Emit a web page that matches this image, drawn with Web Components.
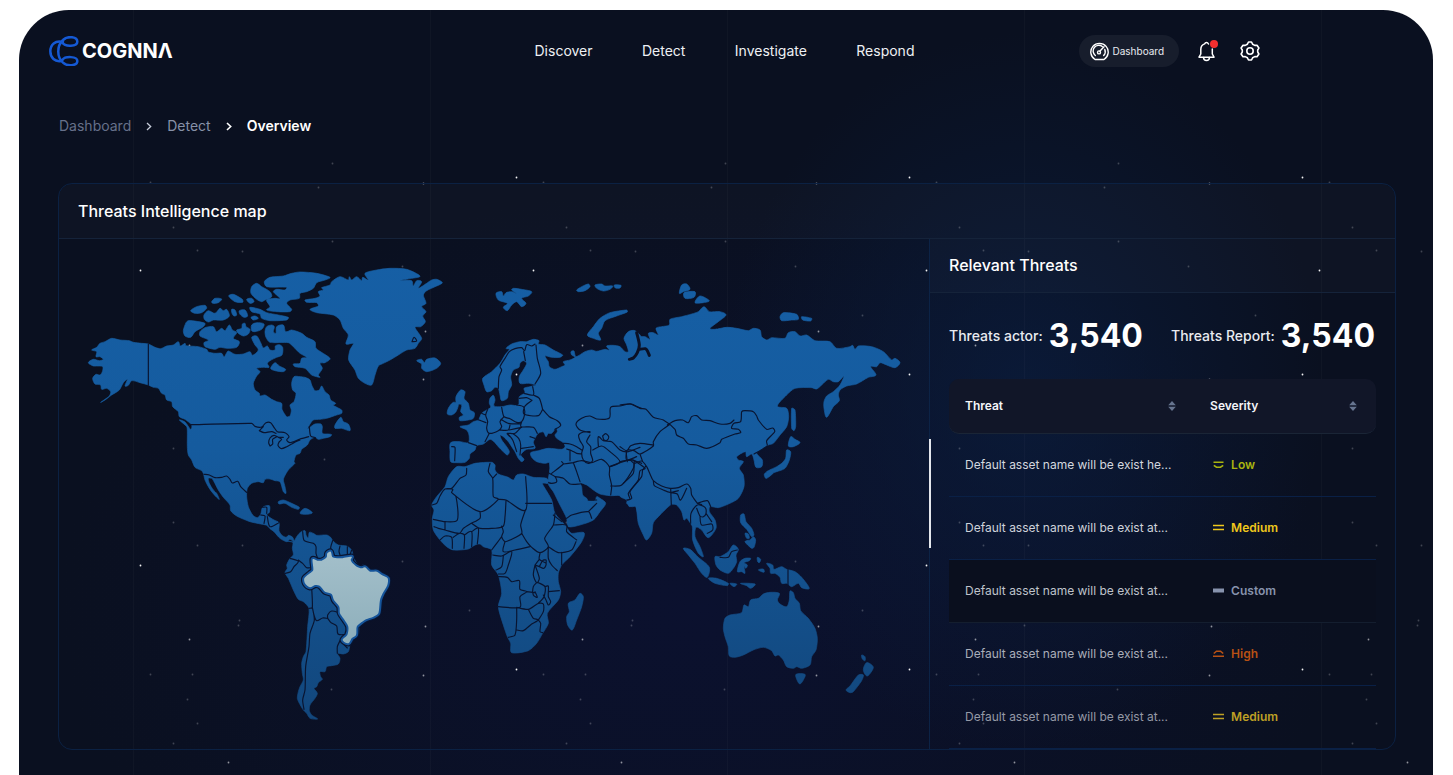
<!DOCTYPE html>
<html lang="en">
<head>
<meta charset="utf-8">
<meta name="viewport" content="width=device-width, initial-scale=1">
<title>Threats Intelligence</title>
<style>
  body { margin: 0; background: #fff; font-family: Inter, "Open Sans", sans-serif; color: #fff; }
</style>
</head>
<body>
<app-shell>
  <app-header slot="header">
    <nav-link href="#discover">Discover</nav-link>
    <nav-link href="#detect">Detect</nav-link>
    <nav-link href="#investigate">Investigate</nav-link>
    <nav-link href="#respond">Respond</nav-link>
  </app-header>
  <bread-crumbs></bread-crumbs>
  <intel-panel>
    <span slot="title">Threats Intelligence map</span>
    <world-map></world-map>
    <threat-panel slot="side">
      <span slot="title">Relevant Threats</span>
      <threat-stat label="Threats actor:" slot="stats">3,540</threat-stat>
      <threat-stat label="Threats Report:" slot="stats">3,540</threat-stat>
      <threat-table></threat-table>
    </threat-panel>
  </intel-panel>
</app-shell>

<script>
const define = (name, html) => {
  const template = document.createElement('template');
  template.innerHTML = html;
  customElements.define(name, class extends HTMLElement {
    constructor() {
      super();
      this.attachShadow({ mode: 'open' }).append(template.content.cloneNode(true));
    }
    connectedCallback() {
      for (const el of this.shadowRoot.querySelectorAll('[data-attr]')) {
        const value = this.getAttribute(el.dataset.attr) || '';
        if (el.tagName === 'A') el.setAttribute('href', value);
        else el.textContent = value;
      }
    }
  });
};

define('app-shell', `
  <style>
    :host { display: block; padding: 10px 20px 0 19px; }
    .frame {
      position: relative; overflow: hidden; box-sizing: border-box;
      min-height: calc(100vh - 10px); padding: 25px 37px 26px 39px;
      border-radius: 50px 50px 0 0; isolation: isolate;
      background:
        radial-gradient(ellipse 300px 360px at 71% 50%, #0a1c3ccc, transparent),
        radial-gradient(ellipse 640px 420px at 48% 78%, #0b112f, #0b112ca0 50%, transparent),
        #0a1020;
    }
    .lines {
      position: absolute; inset: 0; z-index: -1;
      background: linear-gradient(90deg, #ffffff06 1px, transparent 1px) 114px 0 / 297px 100%;
    }
    star-field { position: absolute; inset: 0; z-index: -1; }
    header { margin: 0 -4px 0 -9px; }
  </style>
  <div class="frame">
    <div class="lines"></div>
    <star-field></star-field>
    <header><slot name="header"></slot></header>
    <main><slot></slot></main>
  </div>`);

/* One tile of the sky, repeated across the frame; each entry is x, y. */
const sky = {
  '.95': [[7, 260], [7, 555], [383, 364], [383, 167], [383, 659]],
  '.55': [[56, 629], [290, 173], [292, 321], [290, 369], [292, 616], [290, 665], [95, 752], [56, 335]],
  '.22': [[199, 153], [199, 231], [17, 172], [185, 177], [64, 240], [109, 241], [40, 217], [40, 438],
    [40, 512], [64, 535], [109, 535], [106, 610], [105, 615], [17, 664], [59, 664], [54, 689], [64, 713],
    [40, 733], [191, 449], [198, 679], [269, 256], [336, 305], [269, 551], [336, 600]]
};

define('star-field', `
  <style>:host { display: block; } svg { display: block; width: 100%; height: 100%; }</style>
  <svg aria-hidden="true">
    <defs>
      <pattern id="sky" x="114" width="393" height="765" patternUnits="userSpaceOnUse">
        ${Object.entries(sky).map(([o, list]) => `<g fill="#fff" opacity="${o}">${list.map(([x, y]) => `<circle cx="${x}.5" cy="${y}.5" r=".9"/>`).join('')}</g>`).join('')}
      </pattern>
    </defs>
    <rect x="114" y="150" width="100%" height="100%" fill="url(#sky)"/>
  </svg>`);

define('nav-link', `
  <style>
    :host { display: block; }
    a { display: block; color: #eef0f4; text-decoration: none; font-size: 14px; line-height: 20px; }
  </style>
  <a data-attr="href" href="#"><slot></slot></a>`);

define('app-header', `
  <style>
    :host { display: grid; grid-template-columns: 1fr auto 1fr; align-items: center; height: 32px; }
    .brand { display: flex; align-items: center; gap: 3px; color: #fff; text-decoration: none;
      font-size: 20px; font-weight: 700; line-height: 32px; }
    nav { display: flex; justify-content: space-between; width: 380px; }
    .actions { display: flex; align-items: center; margin-left: 164px; }
    button { border: 0; padding: 0; margin: 0; background: none; color: #fff; font: inherit; display: block; }
    svg { display: block; }
    .pill { display: flex; align-items: center; gap: 4px; width: 100px; height: 32px; padding-left: 11px;
      box-sizing: border-box; border-radius: 16px; background: #171d2c; color: #e8eaf0;
      font-size: 10px; line-height: 16px; flex: none; }
    .bell { margin-left: 18px; }
    .gear { margin-left: 21px; }
  </style>
  <a class="brand" href="#home" aria-label="COGNNA">
    <svg width="30" height="30" viewBox="146 106 90 90" fill="none" stroke="#1559d4" stroke-width="7.5" stroke-linecap="round" aria-hidden="true">
      <path d="M188 124C164 118 150 132 150 152C150 172 164 184 182 181"/>
      <path d="M186 126C194 139 231 138 231 123C231 107 201 105 188 118C169 136 169 169 188 186C201 198 231 196 231 181C231 166 194 166 186 178"/>
    </svg>
    <span>COGNNΛ</span>
  </a>
  <nav aria-label="Main"><slot></slot></nav>
  <div class="actions">
    <button class="pill" type="button">
      <svg width="19" height="19" viewBox="0 0 19 19" fill="none" stroke="#fff" stroke-width="1.4" stroke-linecap="round" stroke-linejoin="round" aria-hidden="true">
        <path d="M5 17.5A8.7 8.7 0 1 1 14 17.5Z"/>
        <path d="M5.3 13.5A5.7 5.7 0 0 1 12.3 4.5M14.8 7.5A5.7 5.7 0 0 1 13.7 13.5"/>
        <path d="M9.8 9.3L14 4.8"/><circle cx="9" cy="10.4" r="1.5"/>
      </svg>
      Dashboard
    </button>
    <button class="bell" type="button" aria-label="Notifications">
      <svg width="22" height="24" viewBox="0 0 22 24" fill="none" stroke="#fff" stroke-width="1.5" stroke-linecap="round" stroke-linejoin="round" aria-hidden="true">
        <path d="M11.5 5C11 4 10.5 3.400 9.500 3.400S8 4 7.600 4.900C5 5.800 3.800 8 3.800 10.500V15L2 18.200H17L15.300 15V10"/>
        <path d="M6.500 18.500C6.600 20.300 7.800 21.600 9.500 21.600S12.400 20.300 12.500 18.500"/>
        <circle cx="17" cy="5" r="4" fill="#f52f2f" stroke="none"/>
      </svg>
    </button>
    <button class="gear" type="button" aria-label="Settings">
      <svg width="20" height="20" viewBox="0 0 20 20" fill="none" stroke="#fff" stroke-width="1.6" stroke-linejoin="round" aria-hidden="true">
        <circle cx="10" cy="10" r="3.200"/>
        <path d="M8.500 1H11.500L12.600 3.200L14.800 4.400L17 4.200L18.900 7L17.700 9V11L18.900 13L17 15.800L14.800 15.600L12.600 16.800L11.500 19H8.500L7.400 16.800L5.200 15.600L3 15.800L1.100 13L2.300 11V9L1.100 7L3 4.200L5.200 4.400L7.400 3.200Z"/>
      </svg>
    </button>
  </div>`);

define('bread-crumbs', `
  <style>
    :host { display: block; margin-top: 49px; }
    nav { display: flex; align-items: center; gap: 15px; height: 20px; font-size: 14px; line-height: 20px; padding-left: 1px; }
    a { text-decoration: none; color: #66708a; }
    a.mid { color: #8791a8; }
    a.here { color: #fff; font-weight: 600; }
    svg { display: block; }
  </style>
  <nav aria-label="Breadcrumb">
    <a href="#dashboard">Dashboard</a>
    <svg width="6" height="9" viewBox="0 0 6 9" fill="none" stroke="#c5cbd8" stroke-width="1.300" aria-hidden="true"><path d="M1 1L4.700 4.500L1 8"/></svg>
    <a class="mid" href="#detect">Detect</a>
    <svg width="6" height="9" viewBox="0 0 6 9" fill="none" stroke="#fff" stroke-width="1.600" aria-hidden="true"><path d="M1 1L4.700 4.500L1 8"/></svg>
    <a class="here" href="#overview" aria-current="page">Overview</a>
  </nav>`);

define('intel-panel', `
  <style>
    :host { display: block; margin-top: 47px; border: 1px solid #0b2143; border-radius: 14px; overflow: hidden; }
    h1 { margin: 0; padding: 0 19px; font-size: 16px; font-weight: 500; line-height: 54px;
      background: #ffffff05; border-bottom: 1px solid #15233a; }
    .body { display: grid; grid-template-columns: minmax(0, 1fr) 466px; }
    .side { position: relative; border-left: 1px solid #0c2346; }
    .thumb { position: absolute; left: -1px; top: 200px; width: 2px; height: 109px; background: #e3e6ec; }
  </style>
  <h1><slot name="title"></slot></h1>
  <div class="body">
    <slot></slot>
    <div class="side"><slot name="side"></slot><div class="thumb"></div></div>
  </div>`);

define('threat-panel', `
  <style>
    :host { display: block; }
    h2 { margin: 0; padding: 0 19px; font-size: 16px; font-weight: 500; line-height: 53px;
      background: #ffffff05; border-bottom: 1px solid #15233a; }
    .stats { display: flex; justify-content: space-between; align-items: center; height: 86px; padding: 0 20px 0 19px; }
  </style>
  <h2><slot name="title"></slot></h2>
  <div class="stats"><slot name="stats"></slot></div>
  <slot></slot>`);

define('threat-stat', `
  <style>
    :host { display: flex; align-items: center; gap: 6px; }
    .label { font-size: 14px; font-weight: 500; line-height: 20px; color: #e9ebf0; }
    .value { font-size: 32px; font-weight: 700; line-height: 40px; }
  </style>
  <span class="label" data-attr="label"></span>
  <span class="value"><slot></slot></span>`);

const sortIcon = `<svg width="8" height="10" viewBox="0 0 8 10" fill="#66748f" aria-hidden="true"><path d="M4 0L7.800 4.300H.2ZM4 10L7.800 5.700H.2Z"/></svg>`;
const marks = {
  low: '<path d="M.5 1.200H10.500M.8 4.300L3.500 6.200H7.500L10.200 4.300"/>',
  medium: '<path d="M0 1.500H11M0 5.500H11"/>',
  custom: '<path d="M0 3.500H11" stroke-width="4"/>',
  high: '<path d="M0 6.300H11M.8 3.500L3.500 1.200H7.500L10.200 3.500"/>'
};
const rows = [
  ['Default asset name will be exist he...', 'low', 'Low', '#a9b40f', '#d3d7df'],
  ['Default asset name will be exist at...', 'medium', 'Medium', '#f0c81c', '#ced2da'],
  ['Default asset name will be exist at...', 'custom', 'Custom', '#8793ad', '#bfc3cb'],
  ['Default asset name will be exist at...', 'high', 'High', '#b85114', '#a9adb9'],
  ['Default asset name will be exist at...', 'medium', 'Medium', '#bea025', '#9599a6']
];

define('threat-table', `
  <style>
    :host { display: block; padding: 0 19px; }
    table { width: 100%; border-collapse: separate; border-spacing: 0; table-layout: fixed; font-size: 12px; line-height: 16px; }
    col.name { width: 56%; }
    th { height: 54px; padding: 0; text-align: left; font-weight: 600; background: #111628; border-bottom: 1px solid #1a2536; }
    th:first-child { border-radius: 10px 0 0 10px; }
    th:last-child { border-radius: 0 10px 10px 0; }
    th button { display: flex; align-items: center; justify-content: space-between; width: 100%; height: 54px;
      padding: 0 12px 0 16px; border: 0; background: none; color: #f4f5f8; font: inherit; }
    th:last-child button { padding: 0 19px 0 22px; }
    td { height: 62px; padding: 0 0 0 16px; border-bottom: 1px solid #0a2046; white-space: nowrap; }
    td + td { padding-left: 25px; font-weight: 600; }
    tr.custom td { background: #0a0f1e; border-bottom-color: #141e2f; }
    .mark { display: flex; align-items: center; gap: 7px; }
    svg { display: block; flex: none; }
  </style>
  <table>
    <colgroup><col class="name"><col></colgroup>
    <thead><tr>
      <th scope="col"><button type="button">Threat ${sortIcon}</button></th>
      <th scope="col"><button type="button">Severity ${sortIcon}</button></th>
    </tr></thead>
    <tbody>${rows.map(([name, kind, label, tint, ink]) => `
      <tr class="${kind}"><td style="color:${ink}">${name}</td>
      <td style="color:${tint}"><span class="mark"><svg width="11" height="8" viewBox="0 0 11 8" fill="none" stroke="currentColor" stroke-width="1.600" aria-hidden="true">${marks[kind]}</svg>${label}</span></td></tr>`).join('')}
    </tbody>
  </table>`);

/* Map geometry: each sheet is drawn at three units per map pixel from its own origin. */
const sheets = [
  { at: [70, 260], land: `
M65 270L80 262 90 250 105 245 125 235 150 240 178 242 190 247 215 250 235 252 255 262 272 266 290 258 310 255 325 245 331 258 345 250 348 257 385 260 410 268 415 276 435 280 455 280 462 291 468 282 475 273 495 283 520 282 540 275 548 286 565 270 555 255 545 232 560 228 572 248 580 264 592 258 600 270 615 270 616 258 628 254 638 262 636 285 620 292 600 302 592 310 597 322 580 322 560 325 570 335 560 348 550 370 555 390 568 400 570 408 585 405 605 418 620 425 635 430 636 448 650 470 660 468 664 450 660 435 672 425 678 400 668 390 665 370 672 350 690 350 705 352 720 360 725 375 735 392 748 390 755 378 765 395 777 405 782 420 797 430 790 436 815 450 815 460 800 465 770 475 750 478 730 480 720 492 713 507 725 498 735 492 753 492 757 500 757 520 775 522 785 524 780 530 760 535 745 538 735 532 720 540 712 555 695 568 690 580 678 585 672 605 675 610 655 630 643 650 640 660 645 680 648 700 640 695 630 665 615 662 600 657 585 658 580 668 565 665 545 670 532 685 530 710 535 740 548 765 562 773 572 763 578 742 598 737 598 757 590 765 612 780 627 788 627 812 635 825 648 832 656 826 668 832 672 845 660 838 650 845 630 835 612 815 600 806 590 796 572 792 540 785 500 768 482 752 480 735 460 712 445 690 432 665 425 655 415 655 418 670 430 690 440 700 448 718 440 712 425 695 415 680 405 660 400 640 395 632 375 622 365 600 355 585 352 560 352 515 350 500 328 480 345 486 362 508 365 495 345 478 328 470 325 455 308 440 305 425 290 420 285 405 275 400 265 385 250 382 235 375 210 368 185 362 175 376 165 378 172 358 160 368 148 390 125 405 105 420 92 427 118 408 122 395 110 385 95 388 92 375 75 372 68 355 78 343 90 345 97 335 98 320 80 318 70 318 55 308 70 298 88 302 100 298 90 290 78 290 80 275Z
M348 188L355 182 380 184 405 190 400 200 375 215 362 232 345 228 340 212ZM390 215L405 203 430 200 440 215 455 205 465 212 478 195 487 210 500 218 490 235 508 245 500 262 470 265 450 262 435 268 405 260 402 248 415 240 390 228ZM362 152L380 140 405 136 410 145 395 158 375 160ZM402 165L415 152 435 160 450 145 460 152 470 148 478 168 460 180 430 180 415 186 403 178ZM425 125L435 115 455 117 445 128 428 130ZM476 108L490 103 517 118 518 127 495 125ZM530 118L545 115 552 125 540 130ZM485 148L495 150 500 165 492 168 486 160ZM508 152L525 150 533 168 522 172 510 163ZM500 210L515 205 517 192 525 190 528 200 540 208 535 222 520 228 503 218ZM545 195L560 188 582 192 575 208 555 215 545 212ZM540 142L570 148 590 158 625 165 655 172 650 180 600 182 575 175 570 162 545 155ZM543 172L555 168 565 175 550 180Z
M545 80L560 70 575 80 600 95 605 110 585 120 575 125 560 118 543 100ZM583 65L600 52 640 48 665 40 690 36 740 40 780 52 765 60 740 68 730 85 710 95 690 100 688 115 660 120 650 130 665 148 660 155 620 155 590 150 600 140 590 120 615 115 630 115 610 95 620 88 645 90 650 82 590 80Z`,
    cut: '', lines: `M235 252L235 376M362 494L545 490 555 499 575 501 588 488 602 488 612 502 622 515 645 518 657 530 650 540 660 548 690 537 716 530M568 512L580 500M568 512L582 518 605 515 618 520M600 558L596 548 600 534 612 526 625 532 635 538 628 545 624 556 634 566 650 560 672 548 690 540M600 558L608 552 608 538 620 530M625 532L640 532M718 500L722 528 736 533M402 643L418 645 435 653 455 652 470 648 480 658 487 669 503 664 512 680 530 697M578 742L590 742 590 760M572 765L585 768 582 790M592 770L600 800 627 788` },
  { at: [240, 260], land: `
M75 215L80 200 95 195 103 200 100 215 108 220 110 200 130 195 137 215 155 210 185 220 200 232 225 245 228 265 270 295 255 308 240 310 247 325 235 345 240 352 215 345 195 325 165 320 160 312 180 310 185 295 200 292 180 280 160 260 145 248 90 247 78 232ZM92 325L105 308 118 318 137 328 130 335 105 332Z
M195 120L225 115 240 108 235 95 250 90 245 83 270 75 275 65 300 50 325 60 328 50 335 60 350 50 365 62 368 52 385 60 375 40 410 30 450 25 500 28 540 48 515 55 480 62 515 62 520 78 530 62 545 65 535 85 560 70 575 60 590 58 607 68 590 78 560 92 550 105 558 130 545 140 558 155 548 168 556 185 542 200 525 202 545 235 535 250 525 265 500 270 475 285 450 300 430 310 415 318 405 345 395 375 375 370 355 355 345 330 326 300 330 270 340 250 318 252 325 225 310 205 300 180 280 165 230 158 210 148 235 138 230 128 200 127ZM530 302L545 298 553 308 560 298 585 294 602 310 590 325 560 335 545 325 545 312ZM285 495L302 472 310 485 325 492 330 512 305 505 285 505Z`, cut: '', lines: 'M516 245L522 232 530 243 516 245' },
  { at: [260, 500], land: `
M55 5L70 0 95 10 118 22 115 28 95 22 75 10 57 12ZM120 40L135 25 157 38 140 43ZM80 123L100 125 110 110 120 98 135 92 138 105 145 114 148 97 160 100 170 106 200 105 212 112 218 122 235 135 260 138 275 150 280 170 290 190 300 200 310 195 325 210 355 212 370 222 388 235 388 255 375 275 362 295 360 325 350 350 320 362 300 378 295 405 280 420 270 435 265 455 250 462 232 460 240 475 235 492 215 497 200 500 195 515 180 515 182 530 187 538 175 548 170 560 162 565 172 580 165 595 150 615 148 632 155 645 173 657 150 655 140 640 130 630 118 610 112 595 115 575 120 560 130 540 127 520 125 490 130 470 138 455 143 380 147 325 130 305 115 298 100 270 85 235 75 218 82 205 80 195 90 175 100 165 97 145 98 127Z`, cut: '', lines: `
M90 175L115 184 102 200 92 215 75 220M115 180L128 190 140 203 155 203M128 95L133 122 160 130 168 140 168 160 175 180M218 122L212 145 222 165 220 175M240 138L237 155 243 172M262 140L262 168M275 150L268 170M155 262L157 322 147 325M157 322L162 345 170 362 188 354 203 355M157 322L163 360 150 400 147 440 137 500 135 570 128 600 132 628M203 355L203 345 215 333 237 338M203 355L212 367 230 378 234 402 255 404M240 422L262 444M240 422L232 440 232 460M255 404L240 422` },
  { at: [420, 270], land: `
M188 325L215 305 240 280 255 255 268 238 258 235 275 222 300 215 320 215 340 208 357 212 355 222 375 225 400 240 428 255 420 262 395 262 375 258 385 275 388 290 405 298 425 290 435 285 430 275 450 270 465 262 455 255 453 245 462 243 468 260 495 245 515 240 530 244 555 238 568 240 560 228 580 226 600 230 615 245 625 245 620 225 612 205 625 185 645 182 665 205 665 610 392 610 392 578 375 580 350 575 335 562 332 548 355 542 385 535 425 538 435 530 430 518 410 505 405 495 412 485 408 475 395 490 385 490 378 500 370 486 355 490 345 505 340 518 345 535 320 538 310 545 302 555 312 568 305 575 295 565 285 545 275 530 265 515 250 500 240 495 245 510 260 530 268 545 262 555 250 545 235 530 222 515 210 508 190 522 170 527 165 540 150 552 148 565 135 577 110 578 92 575 90 545 92 518 120 515 145 518 147 495 140 480 120 470 145 465 160 455 175 450 185 430 200 420 212 412 208 400 210 385 220 376 225 390 222 408 245 410 270 405 295 405 298 380 315 368 312 355 330 350 347 345 325 340 300 340 298 320 310 300 320 280 310 272 300 280 297 292 280 300 272 320 275 345 265 365 262 385 245 392 240 375 235 355 225 352 215 362 200 365 192 345Z
M122 360L135 365 132 385 145 400 150 420 163 428 160 445 145 450 120 452 118 442 130 435 122 425 125 405 110 400 108 380ZM85 415L100 397 115 402 108 425 95 435 82 432ZM228 70L245 65 250 78 258 68 275 65 290 70 275 60 280 55 305 58 335 65 325 78 305 85 318 100 305 110 290 95 275 105 262 122 250 112 262 100 235 90ZM502 195L520 170 540 145 570 128 620 120 622 126 590 138 555 152 545 175 535 190 542 210 520 205ZM470 60L485 50 505 42 510 50 495 62 475 65ZM525 45L545 42 555 48 578 48 570 58 550 63 530 55ZM583 45L603 46 600 54 586 54Z`, cut: '', lines: `
M235 355L237 320 245 300 240 290 255 265 268 245 285 236 305 233 314 242 320 224 335 228 345 222M316 272L311 245M348 225L352 265 362 310 345 342M338 350L340 375 312 370M298 385L320 383 336 391M340 375L358 385 368 418M336 391L315 408 312 432 355 437 368 418M245 412L252 440 270 446 290 457 305 455 314 430 310 410 290 405M368 418L388 440 412 452 422 466 405 478M305 455L303 470 340 472 352 490M203 418L197 435 203 455 200 475 208 490 235 482 245 470 240 455 252 440M172 448L198 458M185 430L197 435M208 490L195 515M145 518L170 527M95 530L105 532 104 572M243 448L265 460 303 462M238 480L265 480 270 465M268 480L305 472M303 472L285 490 262 490 270 500M280 492L296 505 302 525 300 555M262 490L278 510 290 545M330 500L345 505M305 535L340 530M510 488L480 480 468 462 485 445 510 438 530 447 568 444 572 412 600 408 630 402 650 410 665 415M510 485L490 486 476 495 480 512 490 530 485 550 490 570 505 580 518 572 512 550 512 530 500 515 510 495M430 520L450 522 470 530 485 540M440 537L455 542 470 550 485 552M450 540L450 572M518 540L545 528 570 545 600 575 570 590M535 528L535 500 550 512 575 515 600 540 625 545 660 532M600 575L635 570 665 580M548 498L557 491 566 500 562 510 552 510 548 498M620 545L620 570 650 560` },
  { at: [620, 270], land: `
M55 205L75 200 90 208 85 190 100 188 115 195 108 175 125 170 148 165 150 148 185 140 215 132 235 125 252 110 268 125 300 125 318 135 295 155 270 175 285 178 320 172 350 175 385 182 400 175 420 180 425 200 440 210 455 203 495 205 505 188 525 185 540 198 560 195 585 212 630 215 650 235 690 230 698 226 705 238 715 228 755 230 790 245 815 270 825 265 840 278 825 293 800 285 780 278 770 290 752 290 768 315 745 322 710 342 680 348 660 360 655 375 658 392 640 410 620 442 612 415 612 395 620 378 640 365 660 345 672 318 655 335 640 335 625 328 605 345 590 357 575 353 525 355 500 375 472 408 500 415 506 440 500 470 480 495 460 520 445 525 425 538 410 550 427 570 425 590 408 592 402 570 395 552 380 560 376 545 350 560 355 570 370 575 358 595 370 615 372 650 355 685 330 700 295 713 270 710 268 725 285 750 288 775 265 803 245 780 228 772 225 800 240 830 250 860 235 850 218 810 217 770 208 755 200 745 192 750 185 725 170 705 155 703 140 715 120 735 100 758 95 790 80 810 70 795 55 760 48 710 35 710 20 700 22 690 0 678 0 560 55 560Z
M515 415L525 420 527 470 522 482 515 475ZM512 500L525 508 540 518 520 530 505 528ZM178 70L185 45 200 42 210 58 190 65ZM192 68L225 65 222 82 195 85ZM225 98L240 78 268 92 250 98ZM480 140L490 128 530 133 535 148 515 150 485 152ZM545 140L575 145 572 153 548 150Z`,
    cut: 'M50 188L58 225 52 248 40 264 28 268M58 238L76 236 82 242 88 256', lines: `
M0 405L35 402 60 415 78 418 100 442 130 450 165 478 170 495 190 505 205 522 230 525 260 535 300 518 305 508 345 492 362 488 355 478 335 475 342 460 362 455 365 425 375 422 400 425 410 438 415 450 440 478 458 474 464 485 440 512 442 525M142 465L165 452 188 450 205 458 215 440 230 437 245 450 270 452 300 462 330 460 342 450M150 463L120 485 100 515 100 528 60 552 42 542 20 542 22 575M0 530L20 542 32 527 60 520 100 525M0 575L30 570 42 580 65 573 80 590 90 612 100 632 125 648 150 655 175 653 200 642 212 655 215 675 232 700M60 552L68 575M42 580L40 610 10 640M100 632L103 647 130 660 150 667 175 662M152 655L154 705M154 668L172 672 182 690 200 655M78 588L68 600 65 620 30 665 35 685 22 690M232 700L262 692 272 710M212 760L213 730 232 705 255 712 258 730 250 740 240 738 230 715M240 740L245 765 275 762 278 780 262 790M258 730L275 755M402 552L420 542 442 528M232 700L245 704` },
  { at: [420, 450], land: `
M35 165L50 140 75 110 85 80 110 50 135 50 165 40 215 37 225 45 225 60 235 72 265 82 280 90 290 75 310 72 340 82 380 85 386 100 368 100 375 115 395 150 405 190 435 225 445 240 455 250 492 248 485 275 450 320 425 345 415 370 415 395 422 425 415 450 382 490 385 520 368 550 350 580 325 602 275 608 272 580 262 560 250 525 235 470 245 430 235 375 215 345 215 300 190 290 180 282 165 285 145 297 100 300 80 290 60 270 40 240 37 205 42 180Z
M392 30L390 60 385 85 386 105 400 125 420 165 440 205 445 230 480 225 520 210 540 185 557 160 540 145 530 140 525 152 505 152 500 145 488 135 485 110 480 98 500 105 520 120 540 132 570 137 600 137 620 150 628 170 645 165 655 200 665 235 690 200 690 20ZM445 460L465 450 480 430 490 440 485 470 470 510 457 540 443 525 440 500 448 485Z`,
    cut: '', lines: `
M140 55L138 75 120 85 95 115 75 117M35 165L50 160 60 138 75 117 98 118 95 128 180 185 235 148 220 140 218 85 205 65 210 40M218 85L230 72M95 128L108 140 112 210 75 215 40 208M180 185L180 205 150 222 130 235 118 250 75 240 55 235 42 230M75 215L75 240M317 80L317 180 258 150 235 148M317 160L395 160M258 152L255 200 248 230 180 235 155 220M317 178L302 225 305 250 270 270 255 275 245 260 250 245 245 228M305 250L320 275 335 292 360 308 385 290 374 265 400 225 405 190M400 225L440 225 440 245 470 270M385 290L415 308 455 300 468 275M425 307L425 345M385 290L385 325 395 345 412 362M255 275L250 305 285 300 330 290M218 315L245 318 275 305 265 345 255 370 235 372M250 318L245 350 228 360M235 380L262 382 275 395 298 392 300 418 320 425 300 440 300 472 235 470M320 425L345 428M290 472L290 510 285 555 265 562M290 472L325 478 355 460 370 462 370 485 355 510M325 478L340 505 355 510 335 522 310 542 290 540M355 510L362 520 360 545 368 548M345 345L340 375 350 398 358 385 345 345M350 398L340 410 340 435 352 442 345 425M355 398L375 410 372 440 355 460M375 410L385 408 385 440 392 455 385 465 378 450 370 435M385 425L418 422M360 310L358 328 378 340 372 355 358 350 345 345M358 328L345 345M378 340L378 330 368 332 358 350M60 270L75 258 95 262 97 295M100 262L118 250 133 255 132 295M133 255L155 245 155 290M155 245L175 235 172 282M245 260L230 280 215 300M395 70L430 42 425 35M430 42L460 38M388 70L405 80 410 95 395 100 386 98M405 80L430 85 450 102 480 102M460 38L470 65 480 95M440 205L455 195 505 185 515 205M505 150L530 150M505 185L530 160M460 38L485 32 515 38 545 28 568 50 568 75 575 108 572 135M568 50L610 35 640 30 640 55 605 105 572 108M640 30L675 55 660 62 655 90 625 130 630 148 620 150M400 195L425 215` },
  { at: [620, 440], land: `
M500 30L512 35 508 60 495 85 470 95 450 100 440 95 470 80 485 70 497 55ZM433 102L445 95 460 98 445 112 437 115ZM362 225L372 222 378 245 395 265 402 285 395 290 380 268 362 248ZM375 305L390 300 400 290 407 300 402 322 395 325ZM375 280L385 282 388 295 380 295ZM190 325L210 328 235 352 268 382 262 412 245 400 225 370 205 345ZM265 415L290 415 325 430 322 437 285 430ZM330 430L350 432 342 440ZM362 430L405 432 392 445 380 437ZM285 350L300 350 325 335 340 315 355 328 348 345 350 365 340 385 325 400 300 390 288 375ZM360 365L375 355 392 355 388 362 372 368 382 375 378 385 372 380 375 400 365 395 352 395ZM412 352L422 358 418 368 413 365ZM415 390L430 387 432 397ZM440 370L458 375 462 388 485 380 500 388 525 395 545 412 568 445 545 443 535 430 515 440 500 430 485 430 480 412 465 400 452 400 450 385Z
M315 535L330 525 365 518 372 495 385 500 392 480 415 475 430 462 450 457 478 460 472 480 480 492 500 500 508 480 510 453 520 458 525 475 538 490 542 512 565 535 585 565 592 595 588 630 575 650 570 675 545 685 530 680 520 685 500 680 490 660 475 645 465 648 455 632 430 622 400 630 370 645 345 652 328 648 325 620 315 590 310 565ZM528 703L555 703 550 720 540 732 532 722ZM725 645L735 650 735 662 727 657ZM730 690L740 668 760 682 742 708ZM715 705L730 705 725 722 700 755 690 758 678 750 690 738Z`,
    cut: '', lines: 'M504 386L504 440M300 352L325 352 335 335 352 330' }
];

/* Turns each run of points into a curve that passes through them, so coasts and borders have soft corners. */
const smooth = d => d.split('M').filter(s => s.trim()).map(run => {
  const closed = run.includes('Z');
  const n = run.match(/\d+/g).map(Number);
  const p = [];
  for (let i = 0; i < n.length; i += 2) p.push([n[i], n[i + 1]]);
  const at = i => closed ? p[(i + p.length) % p.length] : p[Math.max(0, Math.min(p.length - 1, i))];
  let out = `M${p[0]}`;
  const t = (a, b, span) => {
    const dx = b[0] - a[0], dy = b[1] - a[1], len = Math.hypot(dx, dy) || 1;
    const reach = Math.min(len / 6, span / 4);
    return [dx / len * reach, dy / len * reach];
  };
  for (let i = 0; i < (closed ? p.length : p.length - 1); i++) {
    const [a, b, c, e] = [at(i - 1), at(i), at(i + 1), at(i + 2)];
    const span = Math.hypot(c[0] - b[0], c[1] - b[1]);
    const u = t(a, c, span), v = t(b, e, span);
    out += `C${b[0] + u[0]} ${b[1] + u[1]} ${c[0] - v[0]} ${c[1] - v[1]} ${c}`;
  }
  return out + (closed ? 'Z' : '');
}).join('');

const sheet = (s, d) => `<g transform="translate(${s.at}) scale(.33333)"><path d="${smooth(d)}"/></g>`;
const brazil = smooth('M158 178L172 182 185 182 200 172 202 160 212 155 218 172 240 175 275 170 272 180 278 190 290 200 305 205 315 202 330 215 350 215 365 225 383 235 382 255 368 280 360 300 355 340 340 350 318 358 300 370 290 380 288 405 275 415 265 430 248 420 262 405 265 380 250 355 240 340 238 320 222 300 215 282 195 275 180 258 165 255 150 262 135 250 133 235 150 220 160 210Z');

define('world-map', `
  <style>:host { display: block; } svg { display: block; width: 100%; height: auto; }</style>
  <svg viewBox="59 239 870 510" role="img" aria-label="World map, Brazil highlighted">
    <defs>
      <linearGradient id="sea" x1="0" y1="0" x2="0" y2="1"><stop offset="0" stop-color="#165fa5"/><stop offset=".4" stop-color="#155b9e"/><stop offset="1" stop-color="#12467b"/></linearGradient>
      <linearGradient id="hot" x1="0" y1="0" x2="0" y2="1"><stop offset="0" stop-color="#a3bfca"/><stop offset="1" stop-color="#8eafbb"/></linearGradient>
      <mask id="land" maskUnits="userSpaceOnUse" x="59" y="239" width="871" height="510">
        <g fill="#fff" stroke="#fff" stroke-width="2" stroke-linejoin="round">${sheets.map(s => sheet(s, s.land)).join('')}</g>
        <g fill="none" stroke="#000" stroke-width="9" stroke-linecap="round" stroke-linejoin="round">${sheets.map(s => s.cut ? sheet(s, s.cut) : '').join('')}</g>
      </mask>
    </defs>
    <rect x="59" y="260" width="871" height="470" fill="url(#sea)" mask="url(#land)"/>
    <g fill="none" stroke="#091430" stroke-width="3.500" stroke-linejoin="round" stroke-linecap="round">${sheets.map(s => sheet(s, s.lines)).join('')}</g>
    <g transform="translate(260 500) scale(.33333)" stroke-linejoin="round">
      <path d="${brazil}" fill="none" stroke="#091430" stroke-width="19"/>
      <path d="${brazil}" fill="url(#hot)" stroke="#15549a" stroke-width="12"/>
      <path d="${brazil}" fill="url(#hot)"/>
    </g>
  </svg>`);
</script>
</body>
</html>
